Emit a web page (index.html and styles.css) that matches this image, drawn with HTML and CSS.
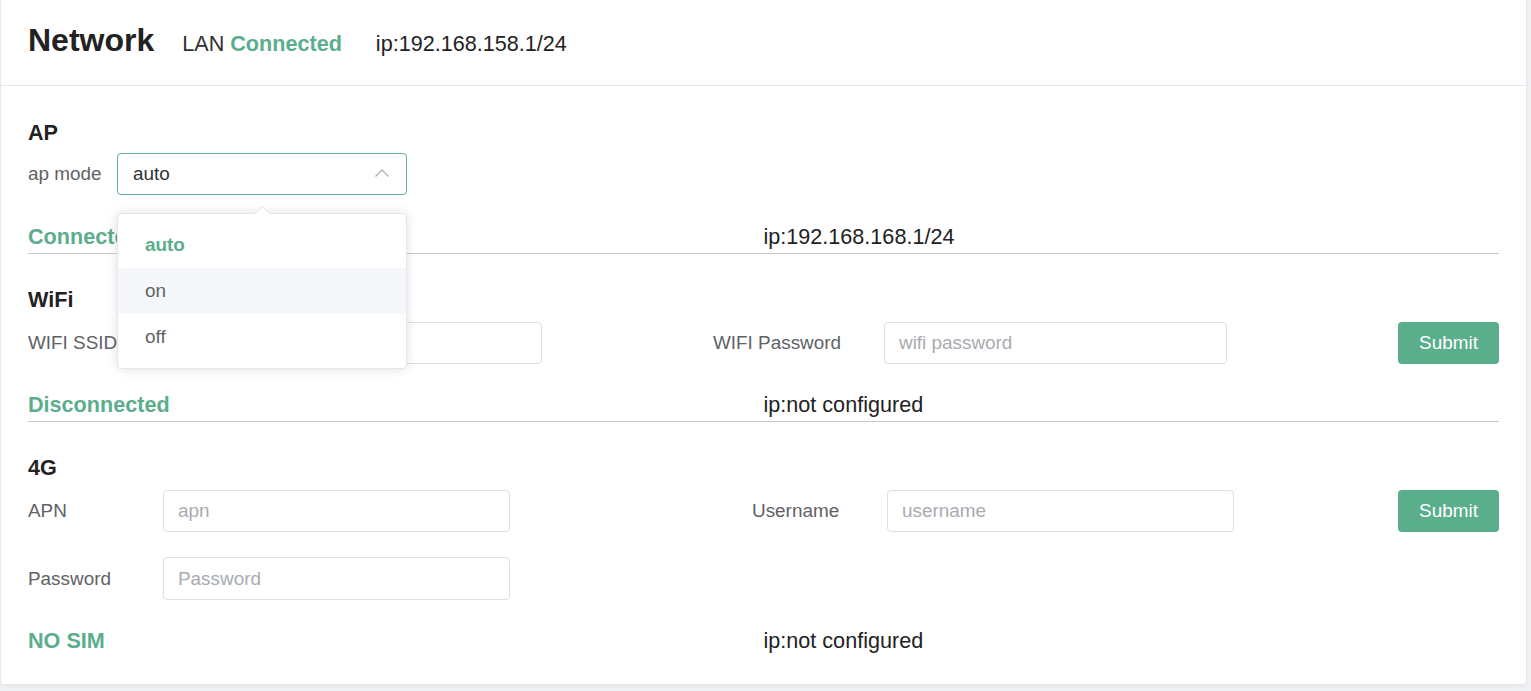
FILE: index.html
```html
<!DOCTYPE html>
<html lang="en">
<head>
<meta charset="utf-8">
<title>Network</title>
<link rel="stylesheet" href="styles.css">
</head>
<body>
<div class="card">
  <div class="card-header">
    <span class="title">Network</span>
    <span class="lan">LAN <b class="ok">Connected</b></span>
    <span class="hdr-ip">ip:192.168.158.1/24</span>
  </div>
  <div class="card-body">
    <h3 class="section">AP</h3>
    <div class="ap-row">
      <span class="label ap-label">ap mode</span>
      <div class="select-wrap">
        <div class="select">
          <span class="select-value">auto</span>
          <svg class="chev" width="16" height="10" viewBox="0 0 16 10"><path d="M1.5 8.5 L8 2 L14.5 8.5" fill="none" stroke="#a8abb2" stroke-width="1.2"/></svg>
        </div>
        <div class="dropdown">
          <span class="arrow"></span>
          <ul class="options">
            <li class="opt selected">auto</li>
            <li class="opt hover">on</li>
            <li class="opt">off</li>
          </ul>
        </div>
      </div>
    </div>
    <div class="status lined first">
      <span class="state">Connected</span>
      <span class="ip">ip:192.168.168.1/24</span>
    </div>

    <h3 class="section">WiFi</h3>
    <div class="form-row wifi-row">
      <span class="label">WIFI SSID</span>
      <input class="input" type="text" placeholder="">
      <span></span>
      <span class="label">WIFI Password</span>
      <input class="input" type="text" placeholder="wifi password">
      <span></span>
      <button class="btn">Submit</button>
    </div>
    <div class="status lined">
      <span class="state">Disconnected</span>
      <span class="ip">ip:not configured</span>
    </div>

    <h3 class="section">4G</h3>
    <div class="form-row g4-row">
      <span class="label">APN</span>
      <input class="input" type="text" placeholder="apn">
      <span></span>
      <span class="label">Username</span>
      <input class="input" type="text" placeholder="username">
      <span></span>
      <button class="btn">Submit</button>
    </div>
    <div class="form-row g4-row second">
      <span class="label">Password</span>
      <input class="input" type="text" placeholder="Password">
    </div>
    <div class="status">
      <span class="state">NO SIM</span>
      <span class="ip">ip:not configured</span>
    </div>
  </div>
</div>
</body>
</html>
```

FILE: styles.css
```css
* { box-sizing: border-box; }
html, body { margin: 0; padding: 0; }
body {
  background: #f2f3f5;
  font-family: "Liberation Sans", Arial, sans-serif;
  color: #303133;
  width: 1531px;
  height: 691px;
  overflow: hidden;
}
.card {
  width: 1527px;
  height: 685px;
  background: #fff;
  border: 1px solid #e4e7ed;
  border-top: none;
  border-radius: 0 0 4px 4px;
  box-shadow: 0 2px 8px rgba(0,0,0,0.06);
}
.card-header {
  height: 86px;
  border-bottom: 1px solid #e4e7ed;
  padding: 0 27px;
  display: flex;
  align-items: baseline;
  padding-top: 22px;
}
.title {
  font-size: 32px;
  font-weight: bold;
  color: #222;
}
.lan {
  font-size: 21.6px;
  margin-left: 28px;
  color: #303133;
}
.ok { color: #5aae8c; }
.hdr-ip {
  font-size: 21.6px;
  margin-left: 34px;
  color: #222;
}
.card-body {
  padding: 32px 27px 0;
}
.section {
  margin: 0;
  font-size: 21.6px;
  line-height: 30px;
  font-weight: bold;
  color: #222;
}
.label {
  font-size: 18.9px;
  color: #606266;
}
.ap-row {
  display: flex;
  align-items: center;
  margin-top: 5px;
  height: 42px;
}
.ap-label { width: 89px; }
.select-wrap { position: relative; }
.select {
  width: 290px;
  height: 42px;
  border: 1px solid #62b394;
  border-radius: 4px;
  display: flex;
  align-items: center;
  justify-content: space-between;
  padding: 0 16px 0 15px;
}
.select-value { font-size: 18.9px; color: #303133; }
.chev { margin-top: -2px; }
.dropdown {
  position: absolute;
  left: 0;
  top: 60px;
  width: 290px;
  background: #fff;
  border: 1px solid #e4e7ed;
  border-radius: 4px;
  box-shadow: 0 0 12px rgba(0,0,0,0.12);
  z-index: 10;
}
.arrow {
  position: absolute;
  top: -6px;
  left: 139px;
  width: 11px;
  height: 11px;
  background: #fff;
  border-left: 1px solid #e4e7ed;
  border-top: 1px solid #e4e7ed;
  transform: rotate(45deg);
}
.options {
  list-style: none;
  margin: 0;
  padding: 8px 0;
}
.opt {
  height: 46px;
  line-height: 46px;
  padding: 0 27px;
  font-size: 18.9px;
  color: #606266;
}
.opt.selected { color: #5aae8c; font-weight: bold; }
.opt.hover { background: #f5f7fa; }
.status {
  display: grid;
  grid-template-columns: 1fr 1fr;
  margin-top: 26px;
  font-size: 21.6px;
  line-height: 30px;
}
.status.first { margin-top: 27px; }
.status.lined {
  border-bottom: 1px solid #c8c9cc;
  padding-bottom: 1px;
}
.state { color: #5aae8c; font-weight: bold; }
.ip { color: #222; }
.status + .section { margin-top: 31px; }
.section + .form-row { margin-top: 7px; }
.form-row {
  display: grid;
  align-items: center;
  height: 42px;
}
.wifi-row {
  grid-template-columns: 135px 379px 171px 171px 343px 1fr 101px;
}
.g4-row {
  grid-template-columns: 135px 347px 242px 135px 347px 1fr 101px;
}
.form-row.second { margin-top: 25px; height: 43px; }
.form-row + .status { margin-top: 26px; }
.input {
  height: 100%;
  width: 100%;
  border: 1px solid #dcdfe6;
  border-radius: 4px;
  padding: 0 14px;
  font-family: inherit;
  font-size: 18.9px;
  color: #303133;
  outline: none;
  background: #fff;
}
.input::placeholder { color: #a8abb2; }
.btn {
  height: 42px;
  width: 101px;
  border: none;
  border-radius: 4px;
  background: #5aae8c;
  color: #fff;
  font-family: inherit;
  font-size: 18.9px;
  padding: 0;
}
```
